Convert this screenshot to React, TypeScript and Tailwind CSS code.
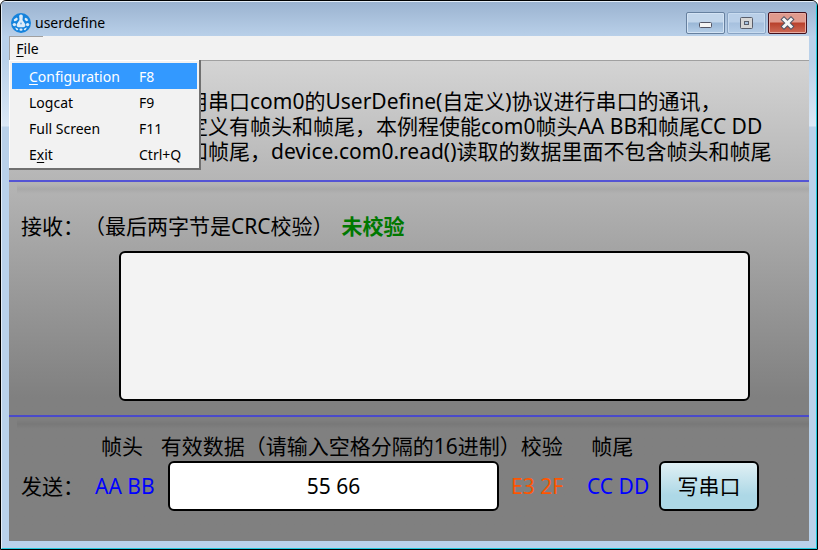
import React, { useState, useCallback } from 'react';

const MENU_ITEMS = [
    { before: '', key: 'C', after: 'onfiguration', shortcut: 'F8' },
    { before: 'Logcat', key: '', after: '', shortcut: 'F9' },
    { before: 'Full Screen', key: '', after: '', shortcut: 'F11' },
    { before: 'E', key: 'x', after: 'it', shortcut: 'Ctrl+Q' }
];

const AppIcon = () => (
    <svg className="w-5 h-5" viewBox="0 0 20 20" aria-hidden="true">
        <circle cx="10" cy="10" r="10" fill="#1583dc" />
        <g fill="#dcecfa">
            <path d="M10 1.4c1.4 0 2 1 1.8 2.2l-.3 3.4 2.6 4c.9 1.7-.2 3.2-1.8 3.2H7.700c-1.600 0-2.700-1.500-1.800-3.200l2.600-4-.3-3.400C8 2.400 8.600 1.400 10 1.400z" />
            <path d="M2.800 6.600l2.800-2.200 1.400 1.600-1.800 2-2.200.2z" />
            <path d="M14 4.800l2.200.6 1 2.200-2 .6-1.600-1.600z" />
            <circle cx="3.400" cy="11.600" r="1.700" />
            <circle cx="16.600" cy="11.600" r="1.700" />
            <path d="M4 14.600l2.400.6 1 1.800-1.800.2zM16 14.600l-2.400.6-1 1.800 1.800.2z" />
            <rect x="8.500" y="15.600" width="3" height="2.200" rx="1" />
        </g>
        <circle cx="10" cy="10.600" r="1" fill="#6fb2ea" />
    </svg>
);

const TitleBar = () => (
    <header className="flex items-center h-[34px] bg-linear-to-b from-[#9bb3d0] to-[#b9d0e9]">
        <div className="flex flex-1 items-center gap-1 pl-[9px] pt-2">
            <AppIcon />
            <h1 className="text-sm leading-5">userdefine</h1>
        </div>
        <div className="flex gap-[2px] pt-2 pr-[9px]">
            <button
                type="button"
                aria-label="Minimize"
                className="flex items-center justify-center w-[39px] h-[22px] rounded-xs border border-[#66809f] bg-linear-to-b from-[#c2d6eb] from-45% via-[#9ab7d6] via-50% to-[#b5cee8] shadow-[inset_0_0_0_1px_#d3e3f4]"
            >
                <svg className="w-4 h-4" viewBox="0 0 16 16">
                    <rect x="1.5" y="7.5" width="12" height="5" rx="1" fill="#f4f4f4" stroke="#535666" />
                </svg>
            </button>
            <button
                type="button"
                aria-label="Maximize"
                className="flex items-center justify-center w-[39px] h-[22px] rounded-xs border border-[#89a4c4] bg-linear-to-b from-[#b9cfe8] from-45% via-[#a6c0de] via-50% to-[#b5cee8] shadow-[inset_0_0_0_1px_#c8dbef]"
            >
                <svg className="w-4 h-4" viewBox="0 0 16 16">
                    <rect x="1.5" y="2.5" width="12" height="11" rx="1" fill="#d6d6d6" stroke="#595e6b" />
                    <rect x="5.5" y="6.5" width="4" height="3" fill="#a9c3e0" stroke="#595e6b" />
                </svg>
            </button>
            <button
                type="button"
                aria-label="Close"
                className="flex items-center justify-center w-[39px] h-[22px] rounded-xs border border-[#43101c] bg-linear-to-b from-[#e09a8d] from-45% via-[#b8402b] via-50% to-[#cd6a57] shadow-[inset_0_0_0_1px_#e8aca2]"
            >
                <svg className="w-4 h-4" viewBox="0 0 16 16">
                    <path d="M4 4.500L11 11.500M11 4.500L4 11.500" stroke="#535666" strokeWidth="5" strokeLinecap="square" />
                    <path d="M4 4.500L11 11.500M11 4.500L4 11.500" stroke="#f6f6f6" strokeWidth="3" strokeLinecap="square" />
                </svg>
            </button>
        </div>
    </header>
);

const FileMenu = () => {
    const [open, setOpen] = useState(true);
    const [active, setActive] = useState(0);

    const handleToggle = useCallback(() => {
        setOpen(value => !value);
    }, []);

    return (
        <nav className="relative flex h-[25px] border-b border-[#a0a0a0] bg-[#f2f2f2] text-sm">
            <button
                type="button"
                aria-expanded={open}
                onClick={handleToggle}
                className="w-[34px] border-t border-l border-[#a0a0a0] pl-[2px] pt-px"
            >
                <span className="underline underline-offset-2">F</span>ile
            </button>
            {open && (
                <ul className="absolute z-10 left-0 top-6 w-48 p-[3px] pb-px pr-[2px] bg-[#f2f2f2] border-r-2 border-b-2 border-[#707070] shadow-[inset_1px_1px_0_#fff]">
                    {MENU_ITEMS.map((item, index) => (
                        <li key={item.shortcut}>
                            <button
                                type="button"
                                onMouseEnter={() => setActive(index)}
                                className={`flex w-full h-[26px] items-center pl-[17px] pt-px text-left ${index === active ? 'bg-[#3399ff] text-white' : ''}`}
                            >
                                <span className="w-[110px]">
                                    {item.before}
                                    {item.key && <span className="underline underline-offset-2">{item.key}</span>}
                                    {item.after}
                                </span>
                                <span>{item.shortcut}</span>
                            </button>
                        </li>
                    ))}
                </ul>
            )}
        </nav>
    );
};

const Divider = () => (
    <div aria-hidden="true">
        <div className="h-[2px] bg-[#3c3cdc]/80" />
        <div className="ml-2 mt-[2px] h-[10px] bg-linear-to-b from-transparent via-black/6 to-transparent" />
    </div>
);

const App = () => {
    const [data, setData] = useState('55 66');

    const handleDataChange = useCallback((e: React.ChangeEvent<HTMLInputElement>) => {
        setData(e.target.value);
    }, []);

    return (
        <div className="min-h-screen flex flex-col overflow-hidden bg-[linear-gradient(to_bottom,#b9d1ea_60px,#dbe8f6_125px,#b9d1ea_126px)] border border-black rounded-t-md font-['Noto_Sans','Noto_Sans_CJK_SC',sans-serif] text-black [text-spacing-trim:space-all]">
            <div className="flex flex-1 flex-col border-t border-l border-t-white/60 border-l-white/60 border-r-[#22c8dc] border-b-[#22c8dc] border-r border-b">
                <TitleBar />
                <div className="flex flex-1 flex-col mx-[7px] mb-[7px]">
                    <FileMenu />
                    <main className="flex-1 bg-linear-to-b from-[#d4d4d4] to-[#808080] to-70% text-[21px] leading-[25px]">
                        <p className="h-[119px] pt-7 pl-[178px] whitespace-nowrap">
                            用串口com0的UserDefine(自定义)协议进行串口的通讯，<br />
                            定义有帧头和帧尾，本例程使能com0帧头AA BB和帧尾CC DD<br />
                            和帧尾，device.com0.read()读取的数据里面不包含帧头和帧尾
                        </p>
                        <Divider />
                        <section className="px-3 pt-5">
                            <div className="flex gap-2">
                                <label htmlFor="received">接收：（最后两字节是CRC校验）</label>
                                <strong className="text-[#007800]">未校验</strong>
                            </div>
                            <div className="pt-3 pl-[98px] pr-[47px]">
                                <textarea
                                    id="received"
                                    readOnly
                                    className="block w-full h-[150px] resize-none rounded-md border-2 border-black bg-[#f3f3f3]"
                                />
                            </div>
                        </section>
                        <div className="h-[14px]" />
                        <Divider />
                        <section className="px-3 pt-[5px] whitespace-nowrap">
                            <div className="flex pl-20 pr-[135px]">
                                <span className="w-[60px]">帧头</span>
                                <label htmlFor="payload" className="flex-1">有效数据（请输入空格分隔的16进制）</label>
                                <span className="w-[71px]">校验</span>
                                <span className="w-[71px]">帧尾</span>
                            </div>
                            <div className="flex items-center pt-[2px] pr-[38px]">
                                <span className="w-[74px]">发送：</span>
                                <span className="w-[73px] text-[#0000ff]">AA BB</span>
                                <input
                                    id="payload"
                                    value={data}
                                    onChange={handleDataChange}
                                    className="flex-1 min-w-0 h-[50px] rounded-md border-2 border-black bg-white text-center"
                                />
                                <span className="w-[88px] pl-3 text-[#ff5500]">E3 2F</span>
                                <span className="w-[72px] text-[#0000ff]">CC DD</span>
                                <button type="button" className="w-[100px] h-[50px] rounded-md border-2 border-black bg-linear-to-b from-[#e0f0f4] to-[#add8e6] to-70%">
                                    写串口
                                </button>
                            </div>
                        </section>
                    </main>
                </div>
            </div>
        </div>
    );
};

export default App;
